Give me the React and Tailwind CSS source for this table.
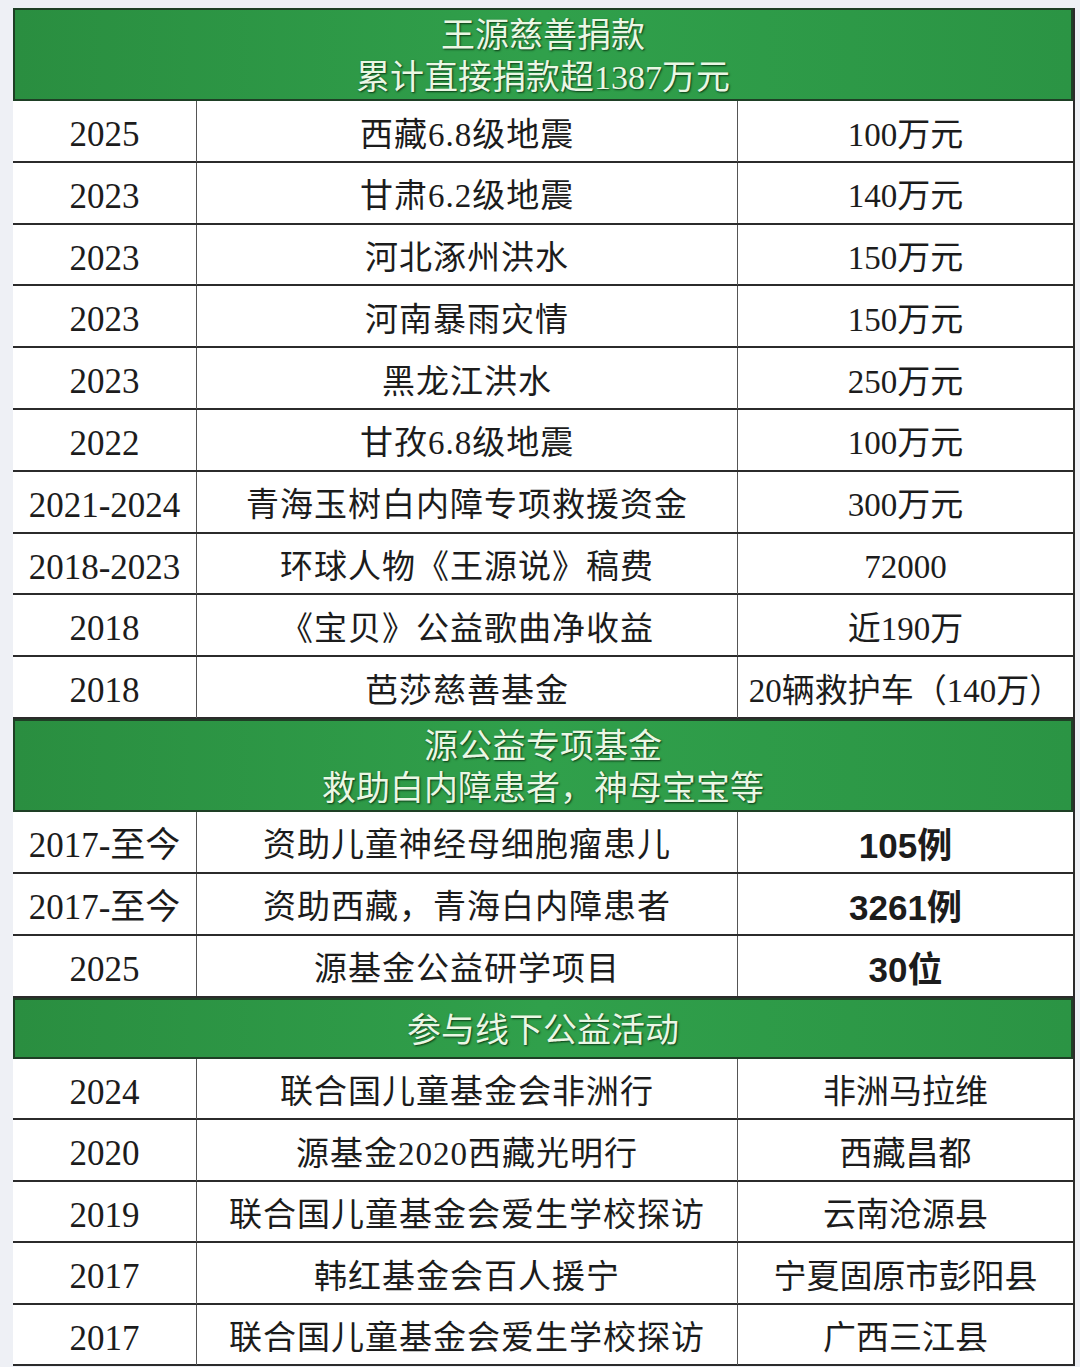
const donations = [
  ['2025', '西藏6.8级地震', '100万元'],
  ['2023', '甘肃6.2级地震', '140万元'],
  ['2023', '河北涿州洪水', '150万元'],
  ['2023', '河南暴雨灾情', '150万元'],
  ['2023', '黑龙江洪水', '250万元'],
  ['2022', '甘孜6.8级地震', '100万元'],
  ['2021-2024', '青海玉树白内障专项救援资金', '300万元'],
  ['2018-2023', '环球人物《王源说》稿费', '72000'],
  ['2018', '《宝贝》公益歌曲净收益', '近190万'],
  ['2018', '芭莎慈善基金', '20辆救护车（140万）'],
]

const fund = [
  ['2017-至今', '资助儿童神经母细胞瘤患儿', '105例'],
  ['2017-至今', '资助西藏，青海白内障患者', '3261例'],
  ['2025', '源基金公益研学项目', '30位'],
]

const events = [
  ['2024', '联合国儿童基金会非洲行', '非洲马拉维'],
  ['2020', '源基金2020西藏光明行', '西藏昌都'],
  ['2019', '联合国儿童基金会爱生学校探访', '云南沧源县'],
  ['2017', '韩红基金会百人援宁', '宁夏固原市彭阳县'],
  ['2017', '联合国儿童基金会爱生学校探访', '广西三江县'],
]

function Header({ lines, tall }) {
  return (
    <div
      className={`flex flex-col items-center justify-center border-2 border-[#1e3f25] bg-gradient-to-r from-[#2a8e40] via-[#30a04b] to-[#2b9444] pt-[5px] text-[34px] leading-[42px] text-[#eaf7e4] [text-shadow:1px_1px_2px_#0a3814] ${tall ? 'h-[93px]' : 'h-[61px]'}`}
    >
      {lines.map((l) => (
        <div key={l}>{l}</div>
      ))}
    </div>
  )
}

function Row({ cells, bold, h = 'h-[62px]' }) {
  return (
    <div className={`grid grid-cols-[183px_541px_1fr] border-b-2 border-[#2b2b2b] bg-white pt-[8px] ${h}`}>
      <div className="flex items-center justify-center text-[35px] text-[#1c1c1c]">{cells[0]}</div>
      <div className="-mt-[8px] flex items-center justify-center border-l border-[#555] pt-[8px] text-[33px] tracking-[1px] text-[#1c1c1c]">
        {cells[1]}
      </div>
      <div
        className={`-mt-[8px] flex items-center justify-center border-l border-[#555] pt-[8px] text-[#1c1c1c] ${
          bold ? "font-bold text-[35px] [font-family:'Liberation_Sans','Noto_Sans_CJK_SC',sans-serif]" : 'text-[33px]'
        }`}
      >
        {cells[2]}
      </div>
    </div>
  )
}

export default function App() {
  return (
    <div className="h-[1367px] overflow-hidden bg-[#eef0f5] pl-[13px] pr-[5px] pt-[8px] [font-family:'Liberation_Serif','Noto_Sans_CJK_SC',serif]">
      <div className="border-r-2 border-[#2b2b2b]">
        <Header tall lines={['王源慈善捐款', '累计直接捐款超1387万元']} />
        {donations.map((r, i) => (
          <Row key={i} cells={r} h="h-[61.8px]" />
        ))}
        <Header tall lines={['源公益专项基金', '救助白内障患者，神母宝宝等']} />
        {fund.map((r, i) => (
          <Row key={i} cells={r} bold />
        ))}
        <Header lines={['参与线下公益活动']} />
        {events.map((r, i) => (
          <Row key={i} cells={r} h="h-[61.5px]" />
        ))}
      </div>
    </div>
  )
}
